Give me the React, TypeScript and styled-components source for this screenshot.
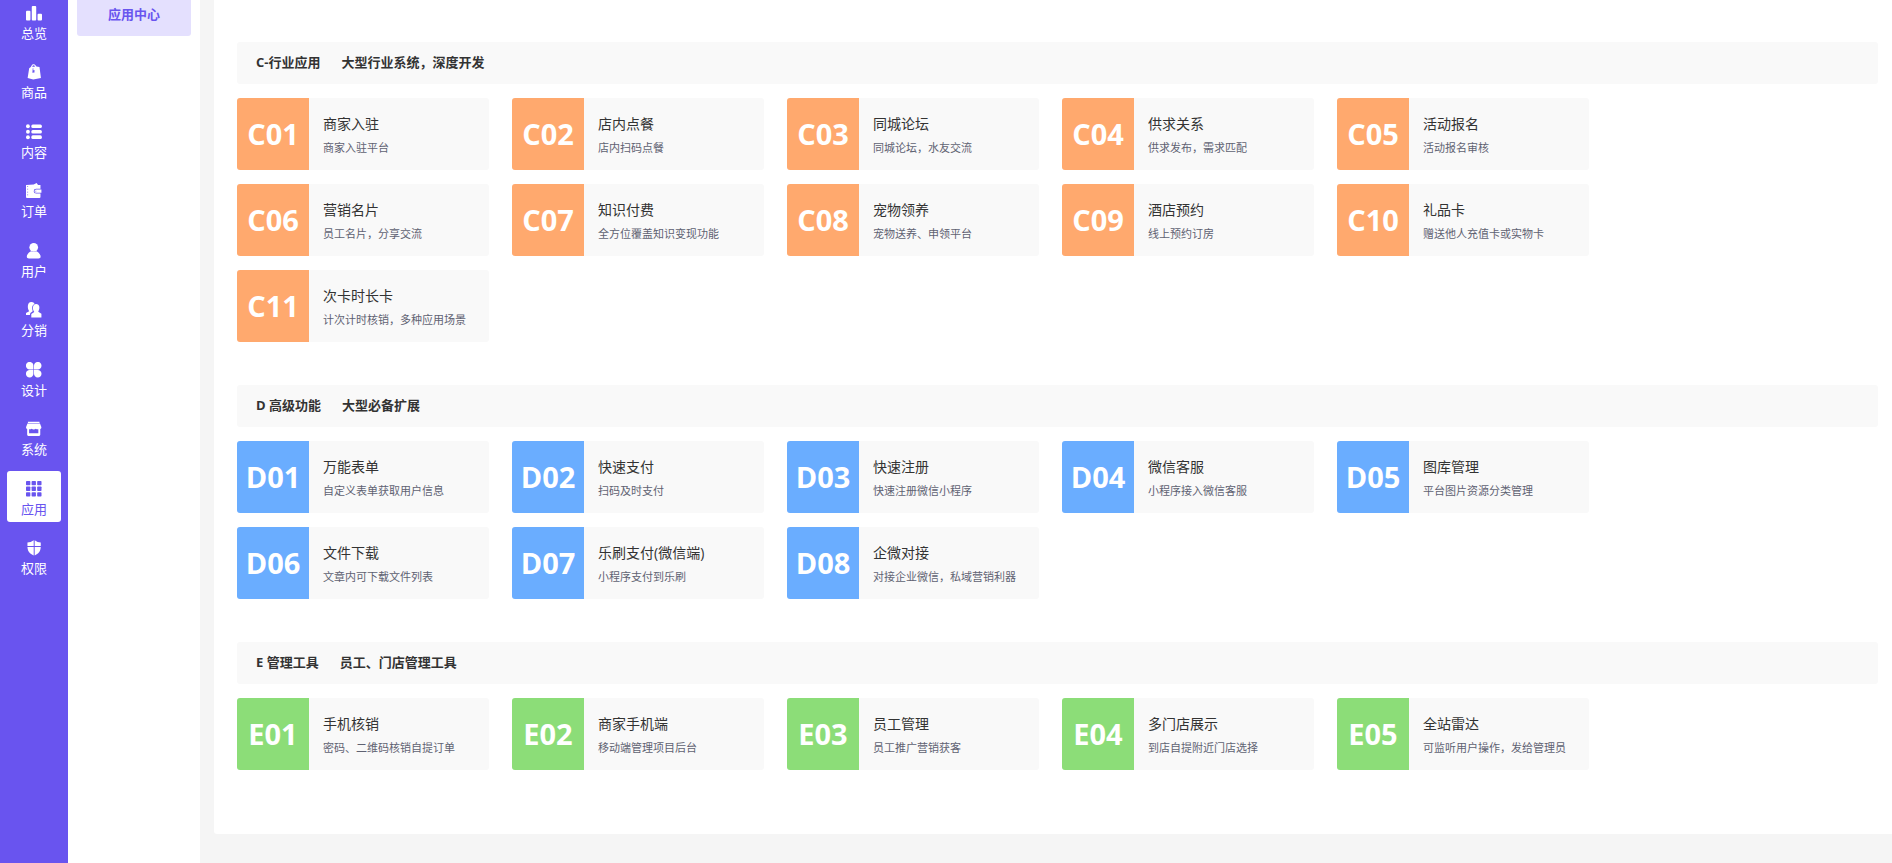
import React from "react";
import styled, { createGlobalStyle } from "styled-components";

const GlobalStyle = createGlobalStyle`
  *, *::before, *::after { box-sizing: border-box; }
  html, body, #root { height: 100%; }
  body {
    margin: 0;
    overflow: hidden;
    background: #f5f5f5;
    color: #333;
    font-family: "Open Sans", "Noto Sans CJK SC", sans-serif;
  }
  h2, h3, p, ul { margin: 0; padding: 0; }
  ul { list-style: none; }
  a { color: inherit; text-decoration: none; }
`;

const Shell = styled.div`
  display: flex;
  min-height: 100%;
`;

const Rail = styled.nav`
  flex: 0 0 68px;
  background: #6954ef;
`;

const RailList = styled.ul`
  display: grid;
  align-content: space-between;
  height: 586px;
  margin: -5px 7px 0;
`;

const RailLink = styled.a<{ $active?: boolean }>`
  display: flex;
  flex-direction: column;
  align-items: center;
  gap: 3px;
  padding: 10px 0 4px;
  border-radius: 3px;
  font-size: 13px;
  line-height: 18px;
  color: ${(p) => (p.$active ? "#6954ef" : "#fff")};
  background: ${(p) => (p.$active ? "#fff" : "transparent")};

  svg {
    display: block;
    width: 16px;
    height: 16px;
    fill: currentColor;
  }
`;

const SubNav = styled.nav`
  flex: 0 0 132px;
  padding: 0 9px;
  background: #fff;
`;

const SubLink = styled.a`
  display: block;
  margin-top: -6px;
  padding-bottom: 2px;
  border-radius: 3px;
  background: #e4e0fe;
  color: #6954ef;
  font-size: 13px;
  font-weight: 600;
  line-height: 40px;
  text-align: center;
`;

const Main = styled.main`
  flex: 1;
  min-width: 0;
  padding: 0 0 29px 14px;
`;

const Panel = styled.div`
  display: flex;
  flex-direction: column;
  gap: 43px;
  padding: 42px 14px 64px 23px;
  border-radius: 0 0 0 3px;
  background: #fff;
`;

const SectionHead = styled.h2`
  display: flex;
  gap: 21px;
  margin-bottom: 14px;
  padding: 0 19px 2px;
  border-radius: 3px;
  background: #f9f9f9;
  font-size: 13px;
  font-weight: 700;
  line-height: 40px;
`;

const Cards = styled.ul`
  display: flex;
  flex-wrap: wrap;
  row-gap: 14px;
`;

const CardItem = styled.li`
  width: 252px;
  margin-right: 23px;
`;

const Card = styled.a`
  display: flex;
  height: 72px;
  overflow: hidden;
  border-radius: 3px;
  background: #f9f9f9;
`;

const Code = styled.span<{ $color: string }>`
  flex: 0 0 72px;
  background: ${(p) => p.$color};
  color: #fff;
  font-size: 29px;
  font-weight: 700;
  line-height: 72px;
  text-align: center;
`;

const CardText = styled.div`
  display: flex;
  flex-direction: column;
  gap: 4px;
  padding: 16px 0 0 14px;
  white-space: nowrap;
`;

const CardName = styled.h3`
  font-size: 14px;
  font-weight: 400;
  line-height: 20px;
`;

const CardNote = styled.p`
  color: #5f6272;
  font-size: 11px;
  line-height: 20px;
`;

const icons: Record<string, React.ReactNode> = {
  overview: (
    <>
      <rect x="0" y="6" width="4.600" height="10" rx="1" />
      <rect x="6" y="1" width="4.600" height="15" rx="1" />
      <rect x="12" y="9" width="4.600" height="7" rx="1" />
    </>
  ),
  goods: (
    <path
      fillRule="evenodd"
      d="M5 3.200 6 1.400C6.500.2 9-.2 9.800 1.200L10.800 2.600 14 3 15.500 14.500 7.500 16 1.700 14.600 3.300 4.500ZM6.600 3 9.600 2.700 8.800 1.700C8.200 1 7.200 1.200 6.900 1.900ZM7 4.500 6.600 9 8.800 8.800V6.300L7.600 6.500V4.500Z"
    />
  ),
  content: (
    <>
      <circle cx="2" cy="2.300" r="2" />
      <circle cx="2" cy="8" r="2" />
      <circle cx="2" cy="13.700" r="2" />
      <rect x="5.500" y="0.400" width="11" height="3.800" rx="1.600" />
      <rect x="5.500" y="6.100" width="11" height="3.800" rx="1.600" />
      <rect x="5.500" y="11.800" width="11" height="3.800" rx="1.600" />
    </>
  ),
  orders: (
    <path
      fillRule="evenodd"
      d="M0 2 8 1.500 11 0 12.500 2H15V6H10.500A2.500 2.500 0 0 0 10.500 11H15V14.500Q15 15.500 14 15.500H1Q0 15.500 0 14.500ZM1.200 3.200V4H2.200V3.200ZM1.200 6V6.800H2.200V6ZM1.200 9V9.800H2.200V9ZM1.200 12V12.800H2.200V12ZM10.500 6.800H16V10.200H10.500A1.700 1.700 0 0 1 10.500 6.800ZM10.500 7.800A.7.700 0 1 0 10.600 9.200Z"
    />
  ),
  users: (
    <>
      <circle cx="8" cy="4.500" r="4.500" />
      <path d="M.8 14.500C.8 11 4 9.200 5.300 8.600Q8 10 10.700 8.600C12 9.200 15.200 11 15.200 14.500Q15.200 16 13 16H3Q.8 16 .8 14.500Z" />
    </>
  ),
  share: (
    <>
      <path d="M5.500 0C8 0 8.800 1.200 8.700 2 6.500 3 6 5.500 6.600 8L7 9.500 4.500 11.500 4 13.500H0V11.300L3.300 9.500C1.300 7 1 0 5.500 0Z" />
      <path d="M10.500 2.200C14.300 2.200 14.800 6.500 12.700 10.200L16 12.300V16H5.500V12.500L8.600 10.500C6.300 7.500 6.800 2.200 10.500 2.200Z" />
    </>
  ),
  design: (
    <>
      <path d="M7.700 7.700H4A3.900 3.900 0 1 1 7.700 4Z" />
      <path d="M8.300 7.700H12A3.900 3.900 0 1 0 8.300 4Z" />
      <path d="M7.700 8.300H4A3.900 3.900 0 1 0 7.700 12Z" />
      <path d="M8.300 8.300H12A3.900 3.900 0 1 1 8.300 12Z" />
    </>
  ),
  system: (
    <path
      fillRule="evenodd"
      d="M2 .8H14V2H2ZM1.500 2.600H14.500L16 6.500Q16 8 14.800 8.300V14.300Q14.800 15.500 13.600 15.500H2.400Q1.200 15.500 1.200 14.300V8.300Q0 8 0 6.500ZM3.200 8.500V12.700H12.800V8.500Q11.300 9 10.300 8 8 9.500 5.700 8 4.700 9 3.200 8.500Z"
    />
  ),
  apps: (
    <>
      {[0, 5.8, 11.6].map((y) =>
        [0, 5.8, 11.6].map((x) => (
          <rect key={`${x}-${y}`} x={x} y={y} width="4.500" height="4.500" rx="0.800" />
        ))
      )}
    </>
  ),
  access: (
    <path d="M8 .2V6.300H1.500V2.700Q5 2.500 8 .2ZM9 .2Q12 2.500 15.300 2.700V6.300H9ZM1.500 7.200H8V16C4 14 1.700 12 1.500 7.200ZM9 7.200H15.300C15.100 12 13 14 9 16Z" />
  ),
};

const railItems = [
  { icon: "overview", label: "总览" },
  { icon: "goods", label: "商品" },
  { icon: "content", label: "内容" },
  { icon: "orders", label: "订单" },
  { icon: "users", label: "用户" },
  { icon: "share", label: "分销" },
  { icon: "design", label: "设计" },
  { icon: "system", label: "系统" },
  { icon: "apps", label: "应用", active: true },
  { icon: "access", label: "权限" },
];

const sections = [
  {
    title: "C-行业应用",
    summary: "大型行业系统，深度开发",
    color: "#ffa96e",
    cards: [
      ["C01", "商家入驻", "商家入驻平台"],
      ["C02", "店内点餐", "店内扫码点餐"],
      ["C03", "同城论坛", "同城论坛，水友交流"],
      ["C04", "供求关系", "供求发布，需求匹配"],
      ["C05", "活动报名", "活动报名审核"],
      ["C06", "营销名片", "员工名片，分享交流"],
      ["C07", "知识付费", "全方位覆盖知识变现功能"],
      ["C08", "宠物领养", "宠物送养、申领平台"],
      ["C09", "酒店预约", "线上预约订房"],
      ["C10", "礼品卡", "赠送他人充值卡或实物卡"],
      ["C11", "次卡时长卡", "计次计时核销，多种应用场景"],
    ],
  },
  {
    title: "D 高级功能",
    summary: "大型必备扩展",
    color: "#6aadff",
    cards: [
      ["D01", "万能表单", "自定义表单获取用户信息"],
      ["D02", "快速支付", "扫码及时支付"],
      ["D03", "快速注册", "快速注册微信小程序"],
      ["D04", "微信客服", "小程序接入微信客服"],
      ["D05", "图库管理", "平台图片资源分类管理"],
      ["D06", "文件下载", "文章内可下载文件列表"],
      ["D07", "乐刷支付(微信端)", "小程序支付到乐刷"],
      ["D08", "企微对接", "对接企业微信，私域营销利器"],
    ],
  },
  {
    title: "E 管理工具",
    summary: "员工、门店管理工具",
    color: "#8cdd78",
    cards: [
      ["E01", "手机核销", "密码、二维码核销自提订单"],
      ["E02", "商家手机端", "移动端管理项目后台"],
      ["E03", "员工管理", "员工推广营销获客"],
      ["E04", "多门店展示", "到店自提附近门店选择"],
      ["E05", "全站雷达", "可监听用户操作，发给管理员"],
    ],
  },
];

export default function App() {
  return (
    <Shell lang="zh-CN">
      <GlobalStyle />
      <Rail>
        <RailList>
          {railItems.map((item) => (
            <li key={item.icon}>
              <RailLink href="#" $active={item.active}>
                <svg viewBox="0 0 16.6 16.6" aria-hidden="true">
                  {icons[item.icon]}
                </svg>
                {item.label}
              </RailLink>
            </li>
          ))}
        </RailList>
      </Rail>
      <SubNav>
        <SubLink href="#">应用中心</SubLink>
      </SubNav>
      <Main>
        <Panel>
          {sections.map((section) => (
            <section key={section.title}>
              <SectionHead>
                <span>{section.title}</span>
                <span>{section.summary}</span>
              </SectionHead>
              <Cards>
                {section.cards.map(([code, name, note]) => (
                  <CardItem key={code}>
                    <Card href="#">
                      <Code $color={section.color}>{code}</Code>
                      <CardText>
                        <CardName>{name}</CardName>
                        <CardNote>{note}</CardNote>
                      </CardText>
                    </Card>
                  </CardItem>
                ))}
              </Cards>
            </section>
          ))}
        </Panel>
      </Main>
    </Shell>
  );
}
